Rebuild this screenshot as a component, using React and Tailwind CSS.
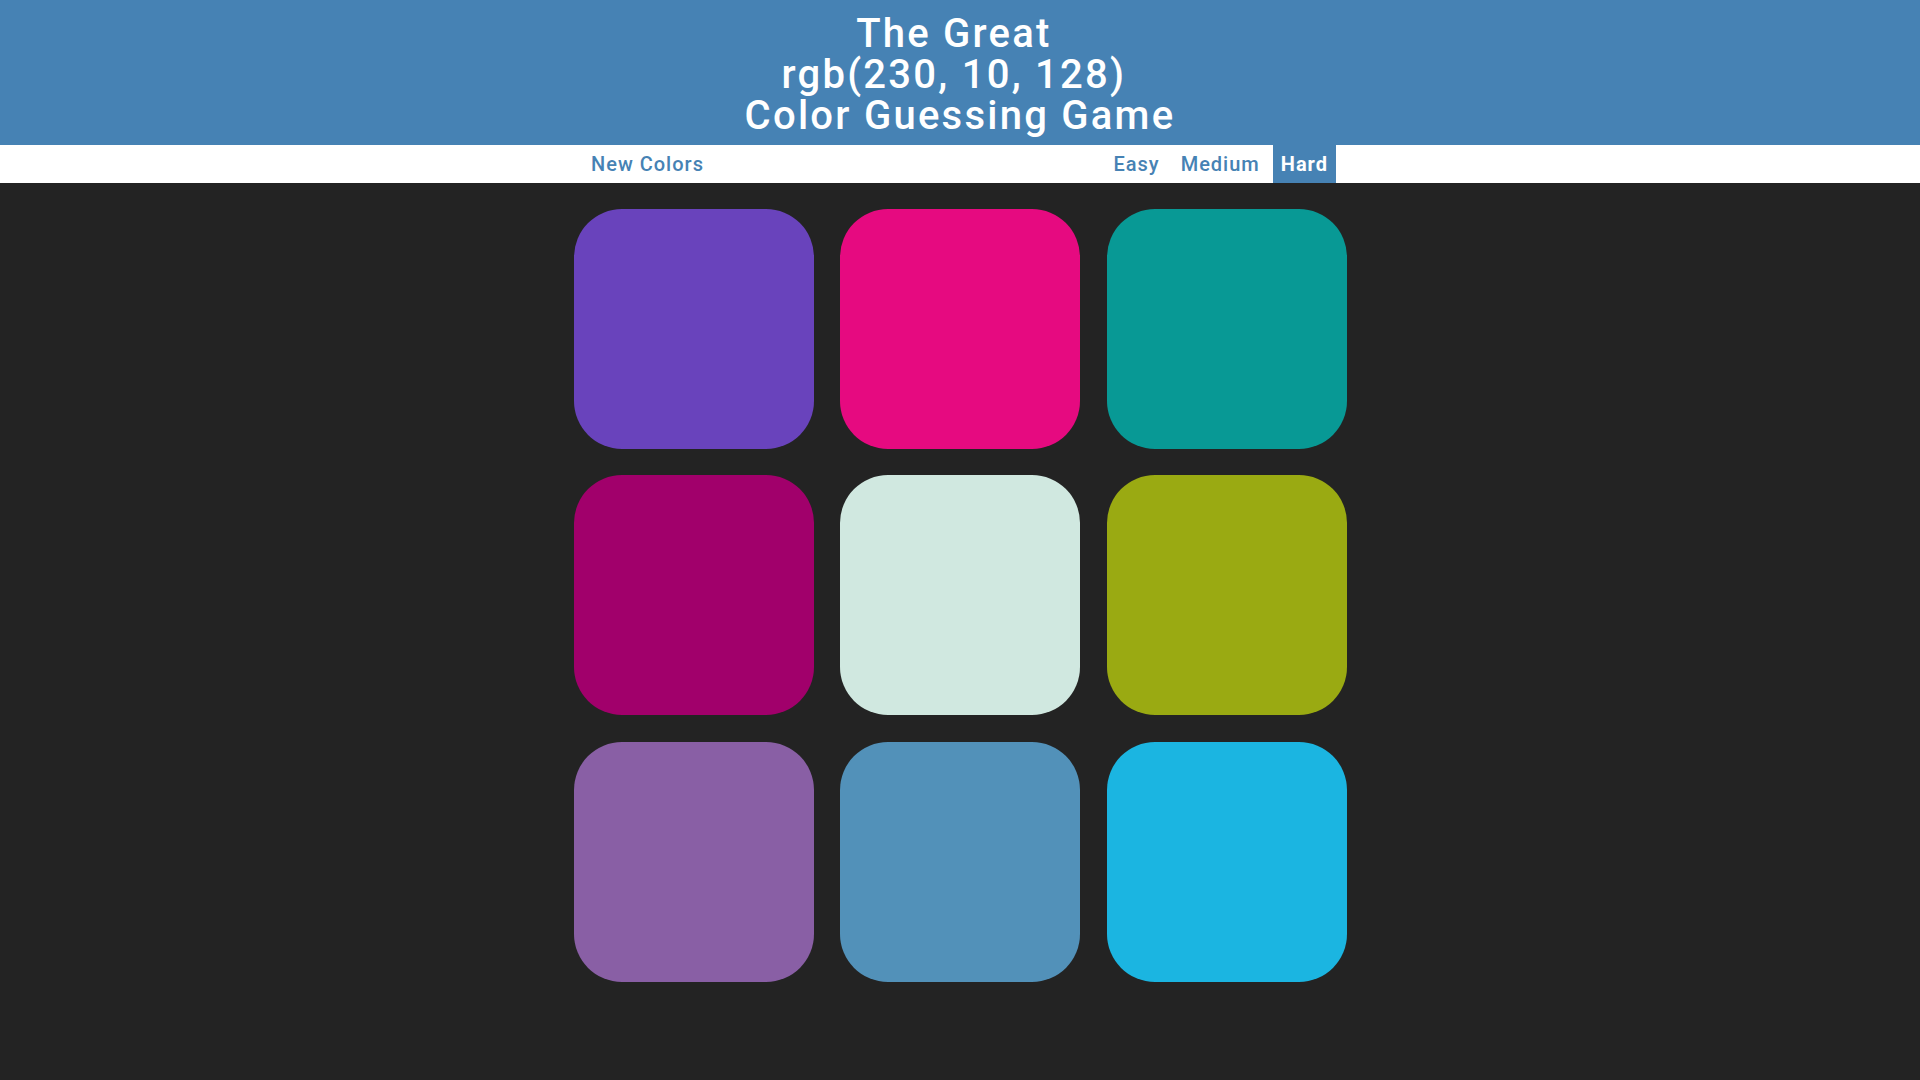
import { useState } from "react";

const squares = [
  "#6943bc",
  "#e60a80",
  "#089995",
  "#a1006b",
  "#d0e8e0",
  "#9aaa12",
  "#895fa5",
  "#5291b9",
  "#1bb5e1",
];

export default function App() {
  const [mode, setMode] = useState("hard");

  return (
    <div className="min-h-screen bg-[#232323] font-['Roboto',sans-serif]">
      {/* Title */}
      <h1 className="bg-[#4682b4] text-white text-center font-medium text-[40px] leading-[41px] tracking-[2.25px] pt-[12.5px] pb-[9.5px]">
        {"The Great\u00a0"}
        <br />
        <span>{"rgb(230, 10, 128)\u00a0"}</span>
        <br />
        Color Guessing Game
      </h1>

      {/* Stripe */}
      <div className="bg-white h-[38px]">
        <div className="w-[752px] mx-auto h-full flex justify-between">
          <button className="px-[7px] h-full text-[20px] font-medium tracking-[1px] text-[#4682b4]">
            New Colors
          </button>
          <div className="flex h-full gap-[5px]">
            {["Easy", "Medium", "Hard"].map((label) => {
              const active = mode === label.toLowerCase();
              return (
                <button
                  key={label}
                  onClick={() => setMode(label.toLowerCase())}
                  className={`px-[8px] h-full text-[20px] tracking-[1px] ${
                    active
                      ? "bg-[#4682b4] text-white font-bold"
                      : "text-[#4682b4] font-medium"
                  }`}
                >
                  {label}
                </button>
              );
            })}
          </div>
        </div>
      </div>

      {/* Squares */}
      <div className="w-[773px] mx-auto pt-[25.5px] grid grid-cols-3 gap-[26.5px]">
        {squares.map((color, i) => (
          <div
            key={i}
            className="w-[240px] h-[240px] rounded-[48px]"
            style={{ backgroundColor: color }}
          />
        ))}
      </div>
    </div>
  );
}
